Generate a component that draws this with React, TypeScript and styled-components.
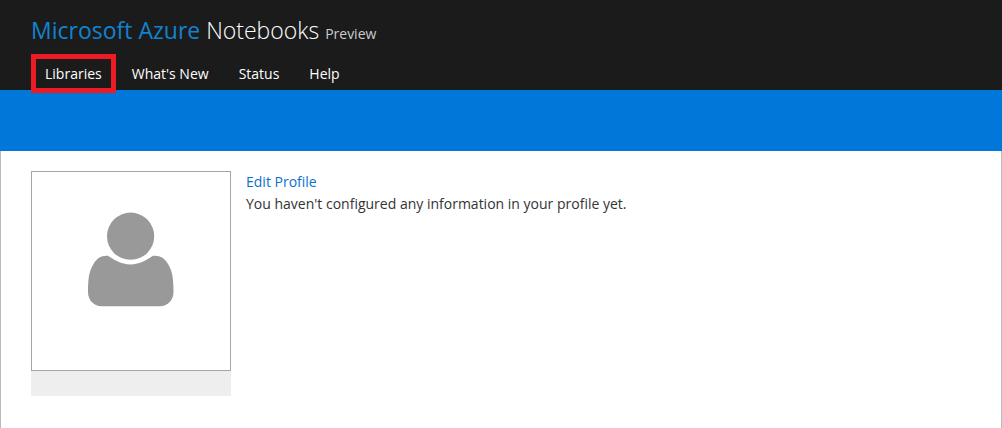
import React from "react";
import styled, { createGlobalStyle } from "styled-components";

const GlobalStyle = createGlobalStyle`
  * { box-sizing: border-box; }
  html, body, #root { height: 100%; }
  body {
    margin: 0;
    background: #fff;
    color: #333;
    font: 14px/22px "Segoe UI", "Open Sans", "Noto Sans", sans-serif;
  }
`;

const Page = styled.div`
  display: flex;
  flex-direction: column;
  min-height: 100%;
`;

const Header = styled.header`
  position: relative;
  z-index: 1;
  display: flex;
  flex-direction: column;
  height: 90px;
  padding: 14px 31px 0;
  background: #1b1b1b;
`;

const Title = styled.h1`
  display: flex;
  align-items: baseline;
  gap: 6px;
  margin: 0;
  font-size: 23px;
  line-height: 32px;
  font-weight: 300;
  color: #fff;
`;

const Brand = styled.a`
  color: #1283d0;
  font-weight: 400;
  text-decoration: none;
`;

const Preview = styled.small`
  font-size: 14px;
  font-weight: 400;
  color: #ccc;
`;

const Nav = styled.nav`
  display: flex;
  align-items: flex-start;
  gap: 2px;
  margin-top: 4px;
`;

const NavLink = styled.a<{ $marked?: boolean }>`
  flex: none;
  padding: 4px 9px;
  border: 5px solid ${(p) => (p.$marked ? "#ed1c24" : "transparent")};
  line-height: 21px;
  color: #fff;
  text-decoration: none;
`;

const Banner = styled.div`
  height: 61px;
  background: #0078d9;
`;

const Content = styled.main`
  display: flex;
  flex: 1;
  align-items: flex-start;
  gap: 15px;
  padding: 20px 30px;
  border: solid #bbb;
  border-width: 0 1px;
`;

const ProfileCard = styled.section`
  flex: none;
  width: 200px;
  padding-bottom: 25px;
  background: #eee;
`;

const Avatar = styled.div`
  display: flex;
  align-items: center;
  justify-content: center;
  height: 200px;
  border: 1px solid #a6a6a6;
  background: #fff;
`;

const Details = styled.section`
  min-width: 0;
`;

const EditLink = styled.a`
  color: #0b72cc;
  text-decoration: none;
`;

const Note = styled.p`
  margin: 0;
`;

export default function App() {
  return (
    <Page>
      <GlobalStyle />
      <Header>
        <Title>
          <Brand href="#">Microsoft Azure</Brand>
          <span>Notebooks</span>
          <Preview>Preview</Preview>
        </Title>
        <Nav>
          <NavLink href="#libraries" $marked>Libraries</NavLink>
          <NavLink href="#new">What's New</NavLink>
          <NavLink href="#status">Status</NavLink>
          <NavLink href="#help">Help</NavLink>
        </Nav>
      </Header>
      <Banner />
      <Content>
        <ProfileCard>
          <Avatar>
            <svg width="198" height="198" viewBox="32 172 198 198" fill="#999" role="img" aria-label="Profile picture">
              <circle cx="130.6" cy="236.2" r="23.6" />
              <path d="M108 255.8C114 259.500 121 264.500 130.500 264.500S147 259.500 153 255.800C160 255.200 164.500 258 168 264C172.500 271 173.500 279 173.500 292C173.500 300 168 306.200 160 306.200H101.500C93.500 306.200 88 300 88 292C88 279 89 271 93.500 264C97 258 101.500 255.200 108 255.800Z" />
            </svg>
          </Avatar>
        </ProfileCard>
        <Details>
          <EditLink href="#profile">Edit Profile</EditLink>
          <Note>You haven't configured any information in your profile yet.</Note>
        </Details>
      </Content>
    </Page>
  );
}
